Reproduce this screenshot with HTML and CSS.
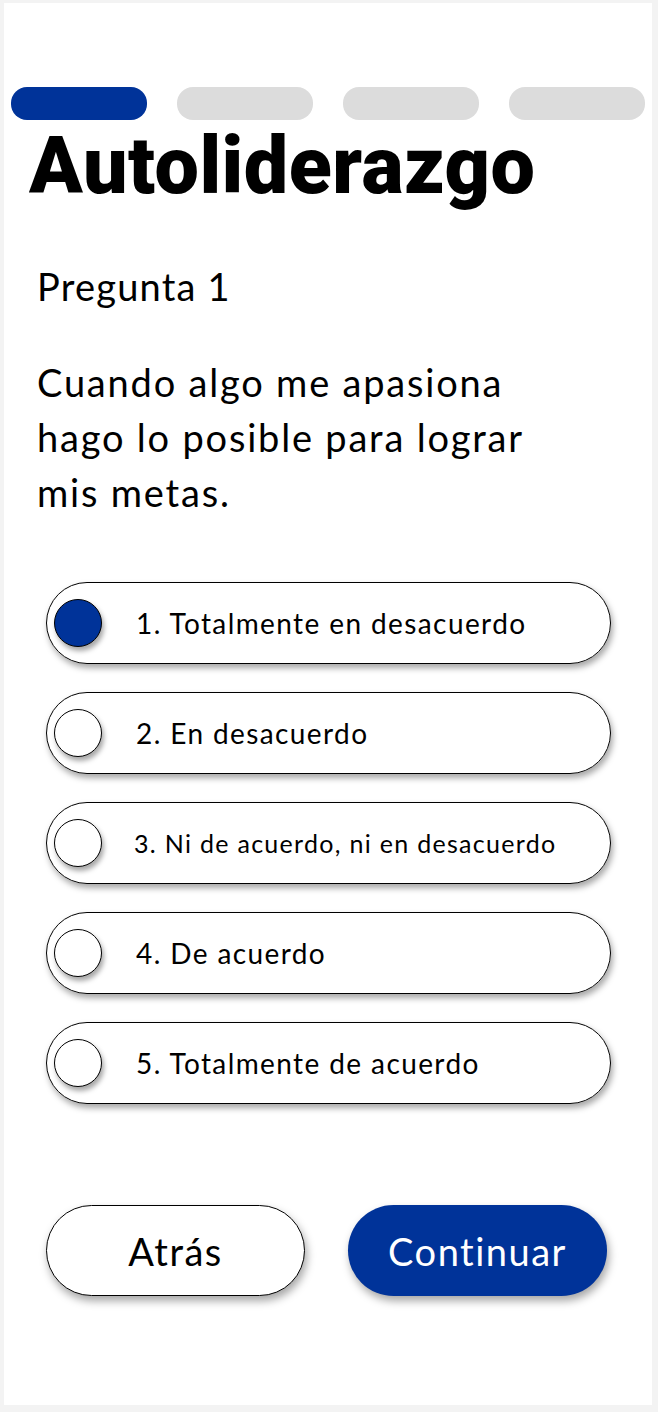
FILE: index.html
```html
<!DOCTYPE html>
<html lang="es">
<head>
<meta charset="utf-8">
<title>Autoliderazgo</title>
<link rel="stylesheet" href="styles.css">
</head>
<body>
<main class="screen">
  <div class="progress">
    <span class="step active"></span>
    <span class="step"></span>
    <span class="step"></span>
    <span class="step"></span>
  </div>
  <h1 class="title">Autoliderazgo</h1>
  <p class="label">Pregunta 1</p>
  <p class="question">Cuando algo me apasiona<br>hago lo posible para lograr<br>mis metas.</p>
  <ul class="options">
    <li class="option selected"><span class="radio"></span><span class="opt-text">1. Totalmente en desacuerdo</span></li>
    <li class="option"><span class="radio"></span><span class="opt-text">2. En desacuerdo</span></li>
    <li class="option"><span class="radio"></span><span class="opt-text small">3. Ni de acuerdo, ni en desacuerdo</span></li>
    <li class="option"><span class="radio"></span><span class="opt-text">4. De acuerdo</span></li>
    <li class="option"><span class="radio"></span><span class="opt-text">5. Totalmente de acuerdo</span></li>
  </ul>
  <div class="actions">
    <button class="btn btn-back">Atrás</button>
    <button class="btn btn-next">Continuar</button>
  </div>
</main>
</body>
</html>
```
FILE: styles.css
```css
* { box-sizing: border-box; }
html, body { margin: 0; padding: 0; }
body {
  background: #f3f3f3;
  font-family: "Lato", "Noto Sans", sans-serif;
  color: #000;
  width: 658px;
  height: 1412px;
  padding: 3px 6px 7px 4px;
}
.screen {
  background: #fff;
  height: 1402px;
  padding-top: 84px;
}
.progress {
  display: grid;
  grid-template-columns: repeat(4, 136px);
  column-gap: 30px;
  margin-left: 7px;
}
.step {
  height: 33px;
  border-radius: 16px;
  background: #dcdcdc;
}
.step.active { background: #003399; }
.title {
  font-family: "Roboto", sans-serif;
  font-weight: 900;
  font-size: 79px;
  line-height: 79px;
  margin: 7px 0 0 25px;
  letter-spacing: 0.5px;
}
.label {
  font-size: 38px;
  line-height: 44px;
  letter-spacing: 1.2px;
  margin: 58px 0 0 33px;
}
.question {
  font-size: 38px;
  line-height: 55px;
  letter-spacing: 1.8px;
  margin: 47px 0 0 33px;
}
.options {
  list-style: none;
  margin: 62px 0 0 42px;
  padding: 0;
  width: 565px;
  display: flex;
  flex-direction: column;
  gap: 28px;
}
.option {
  height: 82px;
  border: 1.5px solid #000;
  border-radius: 41px;
  box-shadow: 2px 4px 6px rgba(0,0,0,0.35);
  display: flex;
  align-items: center;
  padding-left: 7px;
}
.radio {
  width: 48px;
  height: 48px;
  border-radius: 50%;
  border: 1.5px solid #000;
  background: #fff;
  box-shadow: 2px 4px 5px rgba(0,0,0,0.35);
  flex: none;
}
.option.selected .radio { background: #003399; }
.opt-text {
  font-size: 28px;
  letter-spacing: 1.4px;
  margin-left: 34px;
}
.opt-text.small { font-size: 25px; letter-spacing: 1.3px; margin-left: 32px; }
.actions {
  display: flex;
  gap: 43px;
  margin: 101px 0 0 42px;
}
.btn {
  width: 259px;
  height: 91px;
  border-radius: 46px;
  font-family: "Lato", "Noto Sans", sans-serif;
  font-size: 38px;
  letter-spacing: 1.5px;
  box-shadow: 2px 5px 8px rgba(0,0,0,0.35);
  padding: 0;
}
.btn-back {
  background: #fff;
  border: 1.5px solid #000;
  color: #000;
}
.btn-next {
  background: #003399;
  border: none;
  color: #fff;
}
```
